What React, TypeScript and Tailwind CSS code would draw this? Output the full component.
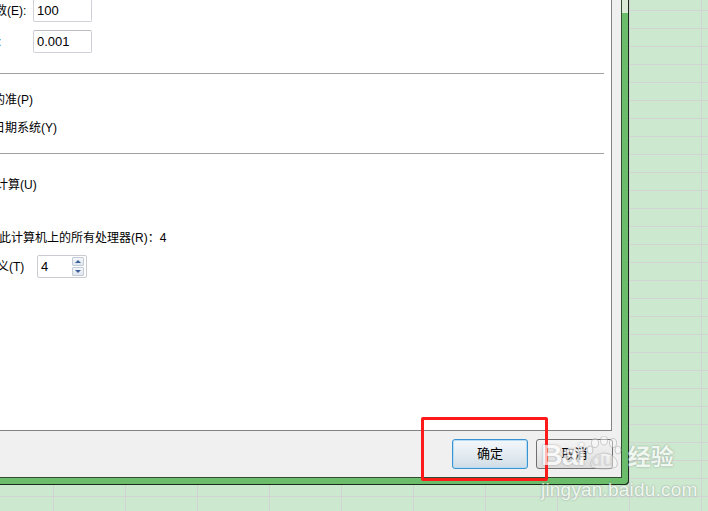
import React from "react";

const font = "font-['Liberation_Sans','Noto_Sans_CJK_SC',sans-serif]";

function Spinner() {
  return (
    <div className="flex h-[23px] w-[50px] items-center justify-between rounded-[2px] border border-[#c9cbd0] bg-white pl-[3px] pr-[2px]">
      <span className="text-[13px] leading-none text-black">4</span>
      <div className="flex flex-col gap-px">
        <div className="flex h-[9px] w-[12px] items-center justify-center rounded-[1px] border border-[#c2cbd6] bg-[linear-gradient(to_bottom,#f4f7fa,#dfe6ee)]">
          <div className="h-0 w-0 border-x-[3px] border-b-[3px] border-x-transparent border-b-[#3a5f9a]" />
        </div>
        <div className="flex h-[9px] w-[12px] items-center justify-center rounded-[1px] border border-[#c2cbd6] bg-[linear-gradient(to_bottom,#f4f7fa,#dfe6ee)]">
          <div className="h-0 w-0 border-x-[3px] border-t-[3px] border-x-transparent border-t-[#3a5f9a]" />
        </div>
      </div>
    </div>
  );
}

function TextInput({ value }: { value: string }) {
  return (
    <div className="flex h-[23px] w-[59px] items-center rounded-[2px] border border-[#cfd1d6] border-t-[#b9bcc2] bg-white pl-[3px] text-[13px] leading-none text-black">
      {value}
    </div>
  );
}

function Watermark() {
  return (
    <div className="pointer-events-none absolute left-[541px] top-[436px] text-white opacity-70 [text-shadow:0_0_2px_rgba(110,110,110,0.9)]">
      <div className="flex items-end">
        <span className="font-['Liberation_Sans',sans-serif] text-[30px] font-bold leading-[30px] tracking-[-1px]">Bai</span>
        <div className="relative ml-[1px] h-[34px] w-[36px]">
          <svg width="36" height="34" viewBox="0 0 36 34" className="absolute left-0 top-0">
            <g fill="white" fillOpacity="0.55" stroke="#a8a8a8" strokeWidth="0.8">
              <ellipse cx="9" cy="7" rx="3.5" ry="4.5" />
              <ellipse cx="18" cy="4.5" rx="3.5" ry="4.5" />
              <ellipse cx="27" cy="7" rx="3.5" ry="4.5" />
              <ellipse cx="32" cy="14" rx="3" ry="4" />
              <ellipse cx="4" cy="14" rx="3" ry="4" />
              <path d="M5 30 C3 24 10 17 18 17 C26 17 33 24 31 30 C29 34 7 34 5 30 Z" />
            </g>
          </svg>
          <span className="absolute left-[5px] top-[14px] font-['Liberation_Sans',sans-serif] text-[19px] font-bold leading-[19px] text-[#d4d4d4] [text-shadow:none]">du</span>
        </div>
        <span className="ml-[6px] font-['Noto_Sans_CJK_SC',sans-serif] text-[23px] font-bold leading-[30px]">经验</span>
      </div>
      <div className="mt-[10px] font-['Liberation_Sans',sans-serif] text-[19px] leading-[20px] tracking-[0.2px]">jingyan.baidu.com</div>
    </div>
  );
}

export default function App() {
  return (
    <div
      className={`relative h-[511px] w-[708px] overflow-hidden bg-[#cce8cf] bg-[linear-gradient(to_right,#d3d3d3_1px,transparent_1px),linear-gradient(to_bottom,#d3d3d3_1px,transparent_1px)] [background-position:53px_10px] [background-size:72px_18px] ${font}`}
    >
      <div className="h-[485px] w-[629px] rounded-br-[4px] bg-[#1b2b1b] pb-px pr-px">
        <div className="h-full w-full rounded-br-[4px] bg-[linear-gradient(to_bottom,#dbebd8_13px,#6cbd6b_13px)] pb-[6px] pr-[6px]">
          <div className="h-full w-full bg-[#2f4d2f] pb-px pr-px">
            <div className="flex h-full w-full flex-col bg-[#f0f0f0]">
              <div className="h-[431px] w-[612px] border-b border-r border-[#838383] bg-white pr-[7px] text-[12px] leading-[16px] text-black">
                <div className="mt-[-1px] flex h-[23px] items-center">
                  <span className="ml-[-5px] w-[38px]">数(E):</span>
                  <TextInput value="100" />
                </div>
                <div className="mt-[8px] flex h-[23px] items-center">
                  <span className="ml-[-14px] w-[47px]">差:</span>
                  <TextInput value="0.001" />
                </div>
                <div className="mt-[20px] h-px bg-[#a0a0a0]" />
                <div className="ml-[-7px] mt-[18px]">的准(P)</div>
                <div className="ml-[-7px] mt-[12px]">日期系统(Y)</div>
                <div className="mt-[17px] h-px bg-[#a0a0a0]" />
                <div className="ml-[-4px] mt-[23px]">计算(U)</div>
                <div className="ml-[-1px] mt-[37px]">此计算机上的所有处理器(R)：4</div>
                <div className="mt-[9px] flex h-[23px] items-center">
                  <span className="ml-[-3px] w-[40px]">义(T)</span>
                  <Spinner />
                </div>
              </div>
              <div className="flex gap-[8px] pl-[452px] pt-[8px]">
                <button className="flex h-[30px] w-[76px] items-center justify-center rounded-[3px] border border-[#3a93d1] bg-[linear-gradient(to_bottom,#f3f7fa,#e4ecf2_50%,#cfdce5)] text-[13px] text-black shadow-[inset_0_0_0_1px_#b8dcf3]">
                  确定
                </button>
                <button className="flex h-[30px] w-[77px] items-center justify-center rounded-[3px] border border-[#707070] bg-[linear-gradient(to_bottom,#f4f4f4,#e9e9e9_50%,#dcdcdc)] text-[13px] text-black">
                  取消
                </button>
              </div>
            </div>
          </div>
        </div>
      </div>
      <div className="pointer-events-none absolute left-[421px] top-[417px] h-[64px] w-[127px] rounded-[2px] border-[3px] border-[#ff1a1a]" />
      <Watermark />
    </div>
  );
}
